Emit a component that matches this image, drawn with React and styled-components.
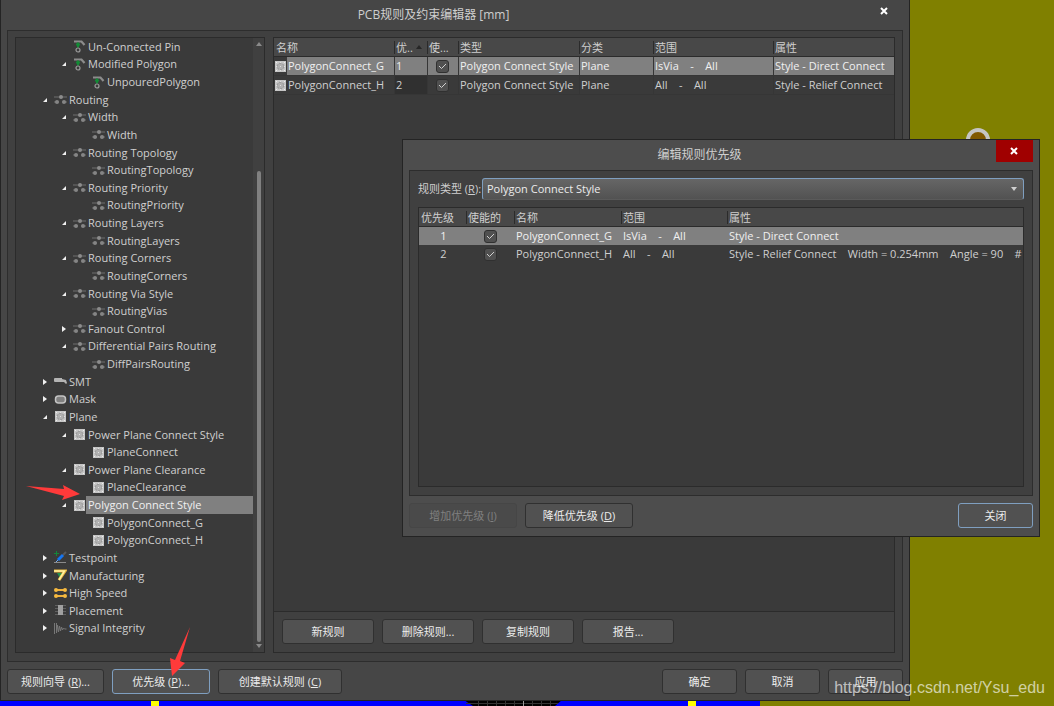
import React from "react";
import styled, { createGlobalStyle } from "styled-components";

const GlobalStyle = createGlobalStyle`
  * {
    box-sizing: border-box;
  }
  body {
    margin: 0;
    background: #808000;
    color: #cfcfcf;
    font: 11px/16px "Open Sans", "Noto Sans CJK SC", sans-serif;
  }
  button,
  select {
    font: inherit;
    color: inherit;
  }
`;

const Desktop = styled.main`
  position: relative;
  height: 100vh;
  overflow: hidden;
`;

const Board = styled.svg`
  position: absolute;
  inset: 0;
  width: 100%;
  height: 100%;
`;

const BoardEdge = styled.svg`
  position: absolute;
  left: 0;
  bottom: 0;
`;

const Dialog = styled.section`
  position: absolute;
  display: flex;
  flex-direction: column;
  border: 1px solid #242424;
  padding: 0 6px;
`;

const EditorDialog = styled(Dialog)`
  inset: -1px 144px 5px 0;
  background: #464646;
`;

const PriorityDialog = styled(Dialog)`
  inset: 139px 14px 169px 402px;
  background: #4d4d4d;
`;

const TitleBar = styled.header`
  display: flex;
  align-items: flex-start;
  height: 30px;
`;

const Title = styled.h1`
  flex: 1;
  margin: 0;
  padding-right: 6px;
  font-size: 12px;
  font-weight: normal;
  line-height: 30px;
  text-align: center;
`;

const CloseButton = styled.button`
  display: grid;
  place-items: center;
  width: 37px;
  height: 22px;
  padding: 0 2px 0 0;
  border: 0;
  background: ${(props) => (props.$danger ? "#a00000" : "transparent")};
`;

const Panel = styled.div`
  flex: 1;
  display: flex;
  min-height: 0;
  gap: 8px;
  padding: 6px 7px 8px;
  border: 1px solid #2d2d2d;
  background: #404040;
`;

const FormPanel = styled(Panel)`
  flex-direction: column;
  gap: 7px;
  padding: 7px 8px 8px;
`;

const TreePanel = styled.nav`
  display: flex;
  width: 250px;
  border: 1px solid #2b2b2b;
  background: #3a3a3a;
`;

const Tree = styled.ul`
  flex: 1;
  display: flex;
  flex-direction: column;
  margin: 0;
  padding: 0 0 15px;
  list-style: none;
`;

const TreeRow = styled.li`
  flex: 1;
  display: flex;
  align-items: center;
  min-height: 0;
  padding-left: ${(props) => props.$level * 19 + 4}px;
`;

const Toggle = styled.button`
  display: grid;
  place-items: center;
  width: 15px;
  height: 16px;
  padding: 0 4px 0 0;
  border: 0;
  background: none;
`;

const ToggleSpace = styled.span`
  width: 15px;
`;

const IconBox = styled.span`
  display: grid;
  place-items: center;
  width: 13px;
  height: 13px;
`;

const TreeLabel = styled.span`
  flex: 1;
  align-self: stretch;
  display: flex;
  align-items: center;
  padding-left: 2px;
  background: ${(props) => (props.$selected ? "#808080" : "transparent")};
  color: ${(props) => (props.$selected ? "#f0f0f0" : "inherit")};
`;

const ScrollBar = styled.div`
  display: flex;
  flex-direction: column;
  align-items: center;
  justify-content: space-between;
  width: 11px;
  padding: 4px 0;
  background: #404040;
`;

const ScrollTrack = styled.div`
  flex: 1;
  display: flex;
  flex-direction: column;
  justify-content: flex-end;
  width: 4px;
  padding-bottom: 2px;
`;

const ScrollThumb = styled.div`
  height: 79%;
  border-radius: 2px;
  background: #808080;
`;

const RulesPanel = styled.div`
  flex: 1;
  display: flex;
  flex-direction: column;
  min-width: 0;
  border: 1px solid #2b2b2b;
  background: #3a3a3a;
`;

const TableArea = styled.div`
  flex: 1;
  min-height: 0;
  overflow: hidden;
`;

const FramedTable = styled(TableArea)`
  border: 1px solid #2b2b2b;
  background: #3a3a3a;
`;

const Table = styled.table`
  width: 100%;
  border-spacing: 0;
  table-layout: fixed;
`;

const Head = styled.th`
  width: ${(props) => (props.$width ? props.$width + "px" : "auto")};
  height: 19px;
  padding: 0;
  border-bottom: 1px solid #2b2b2b;
  background: #484848;
  font-weight: normal;
  text-align: left;
`;

const HeadText = styled.span`
  display: flex;
  align-items: center;
  height: 13px;
  padding-left: 1px;
  border-left: 1px solid ${(props) => (props.$first ? "transparent" : "#2b2b2b")};
  line-height: 13px;
  white-space: nowrap;

  svg {
    margin-left: 3px;
  }
`;

const Row = styled.tr`
  height: ${(props) => props.$height}px;
  background: ${(props) => (props.$selected ? "#808080" : "transparent")};
  color: ${(props) => (props.$selected ? "#f0f0f0" : "inherit")};
`;

const Cell = styled.td`
  padding: 0 0 0 2px;
  overflow: hidden;
  line-height: 16px;
  text-align: ${(props) => (props.$center ? "center" : "left")};
  white-space: pre;
`;

const GridCell = styled(Cell)`
  padding-left: 1px;
  border-left: 1px solid #363636;
  border-bottom: 1px solid #363636;
  background: ${(props) => (props.$dark ? "#303030" : "transparent")};
`;

const NameCell = styled(Cell)`
  padding: 0;
  background: #3a3a3a;
  border-bottom: 1px solid #363636;
`;

const NameBox = styled.div`
  display: flex;
  align-items: center;
`;

const NameText = styled.span`
  flex: 1;
  padding-left: 1px;
  background: ${(props) => (props.$selected ? "#808080" : "transparent")};
  line-height: 18px;
`;

const CheckWrap = styled.label`
  display: grid;
  place-items: center;
  height: 16px;
  margin-right: 2px;

  > * {
    grid-area: 1 / 1;
  }
  svg {
    pointer-events: none;
  }
`;

const CheckInput = styled.input`
  appearance: none;
  width: 13px;
  height: 13px;
  margin: 0;
  border: 1px solid #303030;
  border-radius: 3px;
  background: #505050;
`;

const ButtonBar = styled.div`
  display: flex;
  gap: 8px;
  padding: 7px 8px 8px;
  border-top: 1px solid #2b2b2b;
  background: #404040;
`;

const Footer = styled.footer`
  display: flex;
  gap: 8px;
  padding: 7px 0 6px;

  ${PriorityDialog} & {
    padding-bottom: 8px;
  }
`;

const Spacer = styled.div`
  flex: 1;
`;

const Button = styled.button`
  width: ${(props) => props.$width}px;
  height: 25px;
  padding: 0;
  border: 1px solid ${(props) => (props.$focused ? "#7f9fc0" : "#303030")};
  border-radius: 3px;
  background: #515151;
  color: #ececec;
  white-space: nowrap;

  &:disabled {
    border-color: #464646;
    background: #4a4a4a;
    color: #808080;
  }
`;

const Field = styled.div`
  display: flex;
  align-items: center;
`;

const FieldLabel = styled.label`
  width: 64px;
  white-space: nowrap;
`;

const SelectWrap = styled.div`
  flex: 1;
  display: grid;
  align-items: center;

  > * {
    grid-area: 1 / 1;
  }
  svg {
    justify-self: end;
    margin-right: 7px;
    pointer-events: none;
  }
`;

const Select = styled.select`
  appearance: none;
  height: 22px;
  padding: 0 4px;
  border: 1px solid #7f9fc0;
  border-bottom-color: #5a5a5a;
  border-radius: 3px;
  background: linear-gradient(#666666, #525252);
  color: #ececec;
`;

const Arrows = styled.svg`
  position: absolute;
  left: 0;
  bottom: 0;
  pointer-events: none;
`;

const Watermark = styled.div`
  position: absolute;
  right: 9px;
  bottom: 8px;
  color: rgba(255, 255, 255, 0.65);
  font: 16px/20px "Liberation Sans", sans-serif;
`;

const Cross = () => (
  <svg width="8" height="8" viewBox="0 0 8 8">
    <path d="M1 1l6 6M7 1L1 7" stroke="#fff" strokeWidth="2" />
  </svg>
);

const Triangle = ({ up, color = "#8a8a8a" }) => (
  <svg width="6" height="4" viewBox="0 0 6 4">
    <path d={up ? "M0 4L3 0l3 4z" : "M0 0h6L3 4z"} fill={color} />
  </svg>
);

const icons = {
  pin: (
    <svg width="13" height="13" viewBox="0 0 13 13">
      <path d="M1 1.5h7.500l3 3.500" fill="none" stroke="#8c8c8c" strokeWidth="2.2" />
      <path d="M5 2.500v5M3 4.500h4" stroke="#128a35" strokeWidth="2" />
      <circle cx="5" cy="10" r="2" fill="none" stroke="#9a9a9a" strokeWidth="1.2" />
    </svg>
  ),
  routing: (
    <svg width="13" height="13" viewBox="0 0 13 13">
      <path d="M0 4h13M0 9h13" stroke="#6e6e6e" />
      <path d="M5 9h3" stroke="#3a3a3a" strokeWidth="2" />
      <circle cx="7" cy="4" r="2" fill="#8c8c8c" />
      <circle cx="3" cy="9" r="2" fill="#858585" />
      <circle cx="10" cy="9" r="2" fill="#858585" />
    </svg>
  ),
  smt: (
    <svg width="13" height="13" viewBox="0 0 13 13">
      <path d="M0 4q0-1 1-1h7v1l4 1 1 3-1 1-2-2H1q-1 0-1-1z" fill="#b4b4b4" />
    </svg>
  ),
  mask: (
    <svg width="13" height="13" viewBox="0 0 13 13">
      <rect x="1.500" y="3" width="10" height="7" rx="3" fill="#808080" stroke="#c4c4c4" strokeWidth="1.500" />
    </svg>
  ),
  plane: (
    <svg width="11" height="11" viewBox="0 0 11 11">
      <rect width="11" height="11" fill="#c6c6c6" />
      <circle cx="5.5" cy="5.5" r="3.500" fill="#b0b0b0" />
      <circle cx="5.5" cy="5.5" r="3.300" fill="none" stroke="#919191" strokeDasharray="2 1.450" />
      <path d="M5 5h1v1H5zM5 1h1v1H5zM5 9h1v1H5zM1 5h1v1H1zM9 5h1v1H9z" fill="#e0e0e0" />
      <path d="M1 1h1v1H1zM9 1h1v1H9zM1 9h1v1H1zM9 9h1v1H9z" fill="#ededed" />
    </svg>
  ),
  testpoint: (
    <svg width="13" height="13" viewBox="0 0 13 13">
      <path d="M0 2.500h5M2.5 0v5" stroke="#13863a" />
      <path d="M9 4l3-3" stroke="#585858" strokeWidth="2" />
      <path d="M4 9l5-5" stroke="#1675f0" strokeWidth="3" />
      <path d="M2 11l2-2" stroke="#74aaf0" />
      <path d="M0 11.500h12" stroke="#8b8b8b" />
    </svg>
  ),
  manufacturing: (
    <svg width="13" height="13" viewBox="0 0 13 13">
      <path d="M3 4h8L6 9z" fill="#24944f" />
      <path d="M0 2h11L5 11" fill="none" stroke="#e9b83c" strokeWidth="3" />
      <path d="M0 2h10.500L5 11" fill="none" stroke="#fff0a0" strokeWidth="1.500" />
    </svg>
  ),
  speed: (
    <svg width="13" height="13" viewBox="0 0 13 13">
      <path d="M1 3h11M1 9h11" stroke="#efb13c" strokeWidth="2" />
      <circle cx="2" cy="3" r="2" fill="#f5b93f" />
      <circle cx="11" cy="3" r="2" fill="#f5b93f" />
      <circle cx="2" cy="9" r="2" fill="#f5b93f" />
      <circle cx="11" cy="9" r="2" fill="#f5b93f" />
    </svg>
  ),
  placement: (
    <svg width="13" height="13" viewBox="0 0 13 13">
      <path d="M1 1.5h11M1 4.5h11M1 7.500h11M1 10.500h11" stroke="#606060" />
      <rect x="4" y="1" width="5" height="10" fill="#a0a0a0" />
    </svg>
  ),
  signal: (
    <svg width="13" height="13" viewBox="0 0 13 13">
      <path
        d="M.5 1v11M2.5 1v10l1-8 1 7 1-6 1 5 1-4 1 3 1-2 1 1h2"
        fill="none"
        stroke="#777777"
      />
    </svg>
  ),
};

const treeItems = [
  [2, "pin", "Un-Connected Pin"],
  [2, "pin", "Modified Polygon", "open"],
  [3, "pin", "UnpouredPolygon"],
  [1, "routing", "Routing", "open"],
  [2, "routing", "Width", "open"],
  [3, "routing", "Width"],
  [2, "routing", "Routing Topology", "open"],
  [3, "routing", "RoutingTopology"],
  [2, "routing", "Routing Priority", "open"],
  [3, "routing", "RoutingPriority"],
  [2, "routing", "Routing Layers", "open"],
  [3, "routing", "RoutingLayers"],
  [2, "routing", "Routing Corners", "open"],
  [3, "routing", "RoutingCorners"],
  [2, "routing", "Routing Via Style", "open"],
  [3, "routing", "RoutingVias"],
  [2, "routing", "Fanout Control", "closed"],
  [2, "routing", "Differential Pairs Routing", "open"],
  [3, "routing", "DiffPairsRouting"],
  [1, "smt", "SMT", "closed"],
  [1, "mask", "Mask", "closed"],
  [1, "plane", "Plane", "open"],
  [2, "plane", "Power Plane Connect Style", "open"],
  [3, "plane", "PlaneConnect"],
  [2, "plane", "Power Plane Clearance", "open"],
  [3, "plane", "PlaneClearance"],
  [2, "plane", "Polygon Connect Style", "open"],
  [3, "plane", "PolygonConnect_G"],
  [3, "plane", "PolygonConnect_H"],
  [1, "testpoint", "Testpoint", "closed"],
  [1, "manufacturing", "Manufacturing", "closed"],
  [1, "speed", "High Speed", "closed"],
  [1, "placement", "Placement", "closed"],
  [1, "signal", "Signal Integrity", "closed"],
];

const rules = [
  {
    name: "PolygonConnect_G",
    priority: 1,
    scope: "IsVia    -    All",
    style: "Style - Direct Connect",
    details: "",
  },
  {
    name: "PolygonConnect_H",
    priority: 2,
    scope: "All    -    All",
    style: "Style - Relief Connect",
    details: "    Width = 0.254mm    Angle = 90    #",
  },
];

const ruleColumns = [
  ["名称", 120],
  ["优..", 33],
  ["使...", 31],
  ["类型", 121],
  ["分类", 74],
  ["范围", 120],
  ["属性"],
];

const priorityColumns = [
  ["优先级", 47],
  ["使能的", 48],
  ["名称", 107],
  ["范围", 106],
  ["属性"],
];

const CheckBox = ({ label }) => (
  <CheckWrap>
    <CheckInput type="checkbox" aria-label={label} defaultChecked />
    <svg width="7" height="7" viewBox="0 0 7 7">
      <path d="M0 3l2.5 2.5L7 1" fill="none" stroke="#d0d0d0" />
    </svg>
  </CheckWrap>
);

const TableHead = ({ columns, sorted }) => (
  <thead>
    <tr>
      {columns.map(([text, width], i) => (
        <Head key={text} $width={width}>
          <HeadText $first={i === 0}>
            {text}
            {i === sorted && <Triangle up color="#262626" />}
          </HeadText>
        </Head>
      ))}
    </tr>
  </thead>
);

const RuleTree = () => (
  <TreePanel>
    <Tree>
      {treeItems.map(([level, icon, text, state], i) => (
        <TreeRow key={i} $level={level}>
          {state ? (
            <Toggle type="button" aria-label={text} aria-expanded={state === "open"}>
              <svg width="6" height="6" viewBox="0 0 6 6">
                <path d={state === "open" ? "M5 1v4H1z" : "M1 0l4 3-4 3z"} fill="#f0f0f0" />
              </svg>
            </Toggle>
          ) : (
            <ToggleSpace />
          )}
          <IconBox>{icons[icon]}</IconBox>
          <TreeLabel $selected={text === "Polygon Connect Style"}>{text}</TreeLabel>
        </TreeRow>
      ))}
    </Tree>
    <ScrollBar>
      <Triangle up />
      <ScrollTrack>
        <ScrollThumb />
      </ScrollTrack>
      <Triangle />
    </ScrollBar>
  </TreePanel>
);

const RuleEditor = () => (
  <EditorDialog>
    <TitleBar>
      <Title>PCB规则及约束编辑器 [mm]</Title>
      <CloseButton type="button" aria-label="关闭">
        <Cross />
      </CloseButton>
    </TitleBar>
    <Panel>
      <RuleTree />
      <RulesPanel>
        <TableArea>
          <Table>
            <TableHead columns={ruleColumns} sorted={1} />
            <tbody>
              {rules.map((rule, i) => (
                <Row key={rule.name} $height={19} $selected={i === 0}>
                  <NameCell>
                    <NameBox>
                      <IconBox>{icons.plane}</IconBox>
                      <NameText $selected={i === 0}>{rule.name}</NameText>
                    </NameBox>
                  </NameCell>
                  <GridCell $dark={i === 1}>{rule.priority}</GridCell>
                  <GridCell>
                    <CheckBox label={rule.name} />
                  </GridCell>
                  <GridCell>Polygon Connect Style</GridCell>
                  <GridCell>Plane</GridCell>
                  <GridCell>{rule.scope}</GridCell>
                  <GridCell>{rule.style}</GridCell>
                </Row>
              ))}
            </tbody>
          </Table>
        </TableArea>
        <ButtonBar>
          <Button $width={92}>新规则</Button>
          <Button $width={92}>删除规则...</Button>
          <Button $width={92}>复制规则</Button>
          <Button $width={92}>报告...</Button>
        </ButtonBar>
      </RulesPanel>
    </Panel>
    <Footer>
      <Button $width={97}>
        规则向导 (<u>R</u>)...
      </Button>
      <Button $width={98} $focused>
        优先级 (<u>P</u>)...
      </Button>
      <Button $width={124}>
        创建默认规则 (<u>C</u>)
      </Button>
      <Spacer />
      <Button $width={75}>确定</Button>
      <Button $width={75}>取消</Button>
      <Button $width={75}>应用</Button>
    </Footer>
  </EditorDialog>
);

const PriorityEditor = () => (
  <PriorityDialog>
    <TitleBar>
      <Title as="h2">编辑规则优先级</Title>
      <CloseButton type="button" aria-label="关闭" $danger>
        <Cross />
      </CloseButton>
    </TitleBar>
    <FormPanel>
      <Field>
        <FieldLabel htmlFor="rule-type">
          规则类型 (<u>R</u>):
        </FieldLabel>
        <SelectWrap>
          <Select id="rule-type">
            <option>Polygon Connect Style</option>
          </Select>
          <Triangle color="#d0d0d0" />
        </SelectWrap>
      </Field>
      <FramedTable>
        <Table>
          <TableHead columns={priorityColumns} />
          <tbody>
            {rules.map((rule, i) => (
              <Row key={rule.name} $height={18} $selected={i === 0}>
                <Cell $center>{rule.priority}</Cell>
                <Cell $center>
                  <CheckBox label={rule.name} />
                </Cell>
                <Cell>{rule.name}</Cell>
                <Cell>{rule.scope}</Cell>
                <Cell>
                  {rule.style}
                  {rule.details}
                </Cell>
              </Row>
            ))}
          </tbody>
        </Table>
      </FramedTable>
    </FormPanel>
    <Footer>
      <Button $width={108} disabled>
        增加优先级 (<u>I</u>)
      </Button>
      <Button $width={108}>
        降低优先级 (<u>D</u>)
      </Button>
      <Spacer />
      <Button $width={75} $focused>
        关闭
      </Button>
    </Footer>
  </PriorityDialog>
);

const App = () => (
  <>
    <GlobalStyle />
    <Desktop>
      <Board>
        <circle cx="978" cy="140" r="10" fill="#805800" stroke="#c4c4c4" strokeWidth="4" />
      </Board>
      <BoardEdge width="760" height="6">
        <path d="M0 0h760v6H0z" fill="#0000ff" />
        <path d="M464 0h98l-7 6h-82z" fill="#000" />
        <path
          d="M478.500 0v6M487.500 0v6M496.500 0v6M505.500 0v6M514.500 0v6M532.500 0v6M541.500 0v6M550.500 0v6M466 3.500h92"
          stroke="#333"
        />
        <path d="M523.500 0v6" stroke="#999" />
        <path d="M151 0h8v6h-8zM688 0h8v6h-8z" fill="#ffff00" />
      </BoardEdge>
      <RuleEditor />
      <PriorityEditor />
      <Arrows width="200" height="230" viewBox="0 476 200 230">
        <path
          d="M26 486l38 3-1-4 17 9-18 6 2-4zM190 627l-10 34 5 2-13 13-2-18 5 2z"
          fill="#ff3a3a"
        />
      </Arrows>
      <Watermark>https://blog.csdn.net/Ysu_edu</Watermark>
    </Desktop>
  </>
);

export default App;
